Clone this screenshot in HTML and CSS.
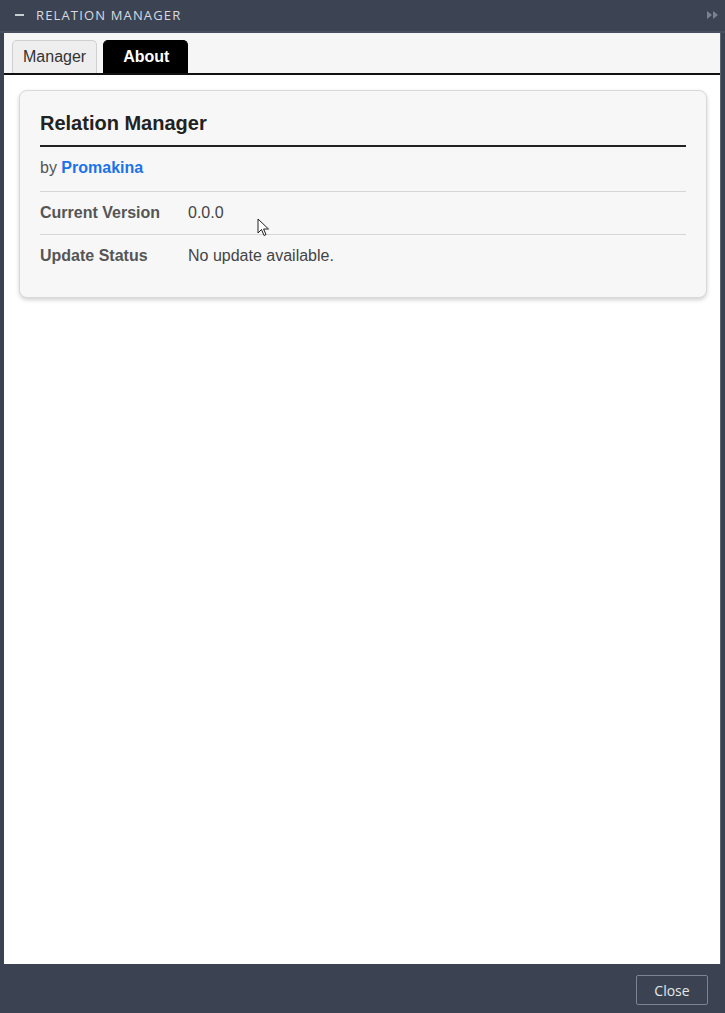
FILE: index.html
```html
<!DOCTYPE html>
<html>
<head>
<meta charset="utf-8">
<link rel="stylesheet" href="styles.css">
</head>
<body>
<div class="window">
  <div class="titlebar">
    <span class="minus"></span>
    <span class="title">RELATION MANAGER</span>
    <svg class="expand" width="11" height="8" viewBox="0 0 11 8"><path d="M0 0 L5 4 L0 8 Z M6 0 L11 4 L6 8 Z" fill="#7b8391"/></svg>
  </div>
  <div class="content">
    <div class="tabs">
      <div class="tab">Manager</div>
      <div class="tab active">About</div>
    </div>
    <div class="panel">
      <div class="card">
        <h1 class="card-title">Relation Manager</h1>
        <div class="by">by <a class="author">Promakina</a></div>
        <div class="row"><span class="label">Current Version</span><span class="value">0.0.0</span></div>
        <div class="row"><span class="label">Update Status</span><span class="value">No update available.</span></div>
      </div>
    </div>
    <svg class="cursor" width="14" height="20" viewBox="0 0 14 20"><path d="M1 1 L1 15 L4.5 11.5 L7 17.5 L9 16.6 L6.6 11 L11.5 11 Z" fill="#fff" stroke="#222" stroke-width="1"/></svg>
  </div>
  <div class="footer">
    <button class="close">Close</button>
  </div>
</div>
</body>
</html>
```
FILE: styles.css
```css
* { box-sizing: border-box; }
html, body { margin: 0; padding: 0; }
body { width: 725px; height: 1013px; background: #3b4352; font-family: "Liberation Sans", Arial, sans-serif; }
.window { display: flex; flex-direction: column; height: 1013px; background: #3b4352; }
.titlebar { height: 33px; display: flex; align-items: center; padding: 0 7px 2px 15px; border-bottom: 2px solid #465062; background: #3c4453; }
.minus { width: 9px; height: 2px; background: #c8ccd3; margin-right: 12px; }
.title { font-family: "Open Sans", "Noto Sans", sans-serif; font-size: 13px; letter-spacing: 1.15px; color: #d6dae0; flex: 1; }
.expand { margin-top: 1px; }
.content { position: relative; flex: 1; margin: 0 4px 0 4px; background: #fff; display: flex; flex-direction: column; border-right: 1px solid #5a6373; }
.tabs { height: 42px; background: #f6f6f6; border-bottom: 2px solid #111; display: flex; align-items: flex-end; padding-left: 8px; gap: 6px; }
.tab { height: 33px; padding: 0 10px; display: flex; align-items: center; font-size: 16px; color: #333; background: #eeeeee; border: 1px solid #cfcfcf; border-bottom: none; border-radius: 5px 5px 0 0; }
.tab.active { background: #000; color: #fff; font-weight: bold; border-color: #000; padding: 0 18px 0 19px; }
.panel { padding: 15px 13px 0 15px; }
.card { background: #f7f7f7; border: 1px solid #d9d9d9; border-radius: 8px; box-shadow: 0 2px 4px rgba(0,0,0,0.18); padding: 20px 20px 19px 20px; }
.card-title { margin: 0; font-size: 20px; font-weight: bold; color: #222; padding-bottom: 10px; border-bottom: 2px solid #222; line-height: 24px; }
.by { font-size: 16px; color: #555; height: 45px; line-height: 42px; border-bottom: 1px solid #d6d6d6; }
.author { color: #1a73e8; font-weight: bold; }
.row { display: flex; height: 43px; line-height: 41px; font-size: 16px; border-bottom: 1px solid #d6d6d6; }
.row:last-child { border-bottom: none; }
.label { width: 148px; font-weight: bold; color: #555; }
.value { color: #444; }
.cursor { position: absolute; left: 253px; top: 185px; }
.footer { height: 49px; display: flex; justify-content: flex-end; align-items: center; padding-right: 17px; background: #3b4352; }
.close { width: 72px; height: 30px; background: #3b4352; border: 1px solid #7c8494; border-radius: 2px; color: #e4e7eb; font-family: "Open Sans", "Noto Sans", sans-serif; font-size: 14px; margin-top: 3px; }
```
